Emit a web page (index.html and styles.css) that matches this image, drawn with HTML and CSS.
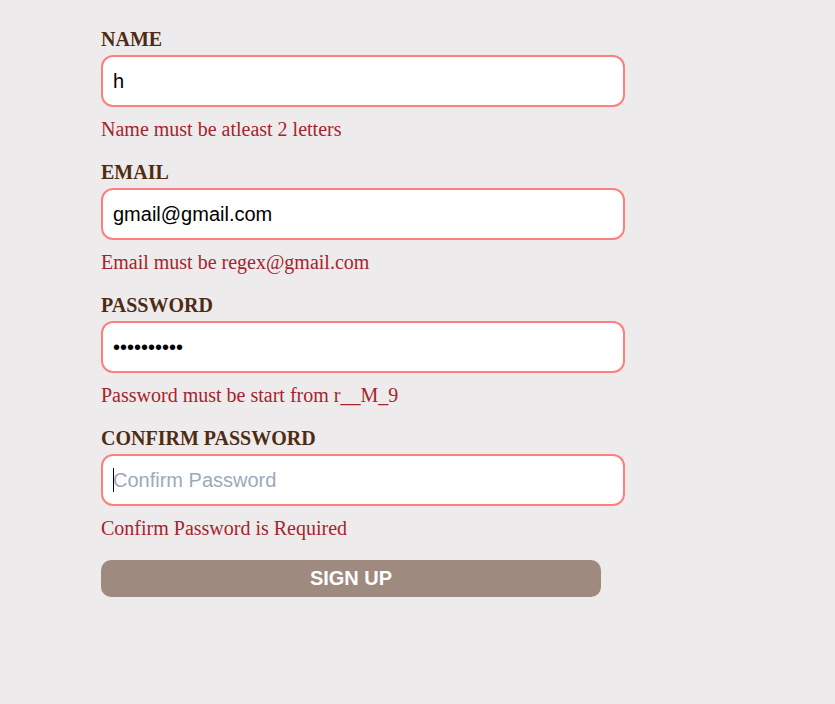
FILE: index.html
```html
<!DOCTYPE html>
<html lang="en">
<head>
<meta charset="utf-8">
<title>Sign Up</title>
<link rel="stylesheet" href="styles.css">
</head>
<body>
<form class="signup">
  <div class="field">
    <label class="field-label" for="name">NAME</label>
    <input class="field-input" id="name" type="text" value="h">
    <p class="field-error">Name must be atleast 2 letters</p>
  </div>
  <div class="field">
    <label class="field-label" for="email">EMAIL</label>
    <input class="field-input" id="email" type="text" value="gmail@gmail.com">
    <p class="field-error">Email must be regex@gmail.com</p>
  </div>
  <div class="field">
    <label class="field-label" for="password">PASSWORD</label>
    <input class="field-input" id="password" type="password" value="abcdefghij">
    <p class="field-error">Password must be start from r__M_9</p>
  </div>
  <div class="field">
    <label class="field-label" for="confirm">CONFIRM PASSWORD</label>
    <div class="input-wrap">
      <input class="field-input" id="confirm" type="password" placeholder="Confirm Password">
      <span class="caret"></span>
    </div>
    <p class="field-error">Confirm Password is Required</p>
  </div>
  <button class="signup-btn" type="button">SIGN UP</button>
</form>
</body>
</html>
```
FILE: styles.css
```css
html, body {
  margin: 0;
  padding: 0;
  background: #eeebec;
}
body {
  font-family: "Liberation Serif", "Times New Roman", serif;
}
.signup {
  display: flex;
  flex-direction: column;
  gap: 22px;
  padding: 29px 0 0 101px;
  width: 524px;
}
.field {
  display: flex;
  flex-direction: column;
}
.field-label {
  font-size: 20px;
  font-weight: bold;
  color: #4e2c14;
  line-height: 20px;
}
.input-wrap {
  position: relative;
  margin-top: 6px;
}
.input-wrap .field-input {
  margin-top: 0;
  width: 100%;
}
.field-input {
  margin-top: 6px;
  box-sizing: border-box;
  width: 524px;
  height: 52px;
  border: 2px solid #fd8080;
  border-radius: 12px;
  background: #fff;
  padding: 0 10px;
  font-family: "Liberation Sans", Arial, sans-serif;
  font-size: 20px;
  color: #000;
  outline: none;
}
.field-input::placeholder {
  color: #9caabb;
}
.caret {
  position: absolute;
  left: 12px;
  top: 14px;
  width: 1px;
  height: 24px;
  background: #000;
}
.field-error {
  margin: 11px 0 0;
  font-size: 20px;
  line-height: 22px;
  color: #a5242c;
}
.signup-btn {
  margin-top: -1px;
  width: 500px;
  height: 37px;
  border: none;
  border-radius: 10px;
  background: #9e8a7e;
  color: #fff;
  font-family: "Liberation Sans", Arial, sans-serif;
  font-weight: bold;
  font-size: 20px;
  padding: 0;
  cursor: pointer;
}
```
